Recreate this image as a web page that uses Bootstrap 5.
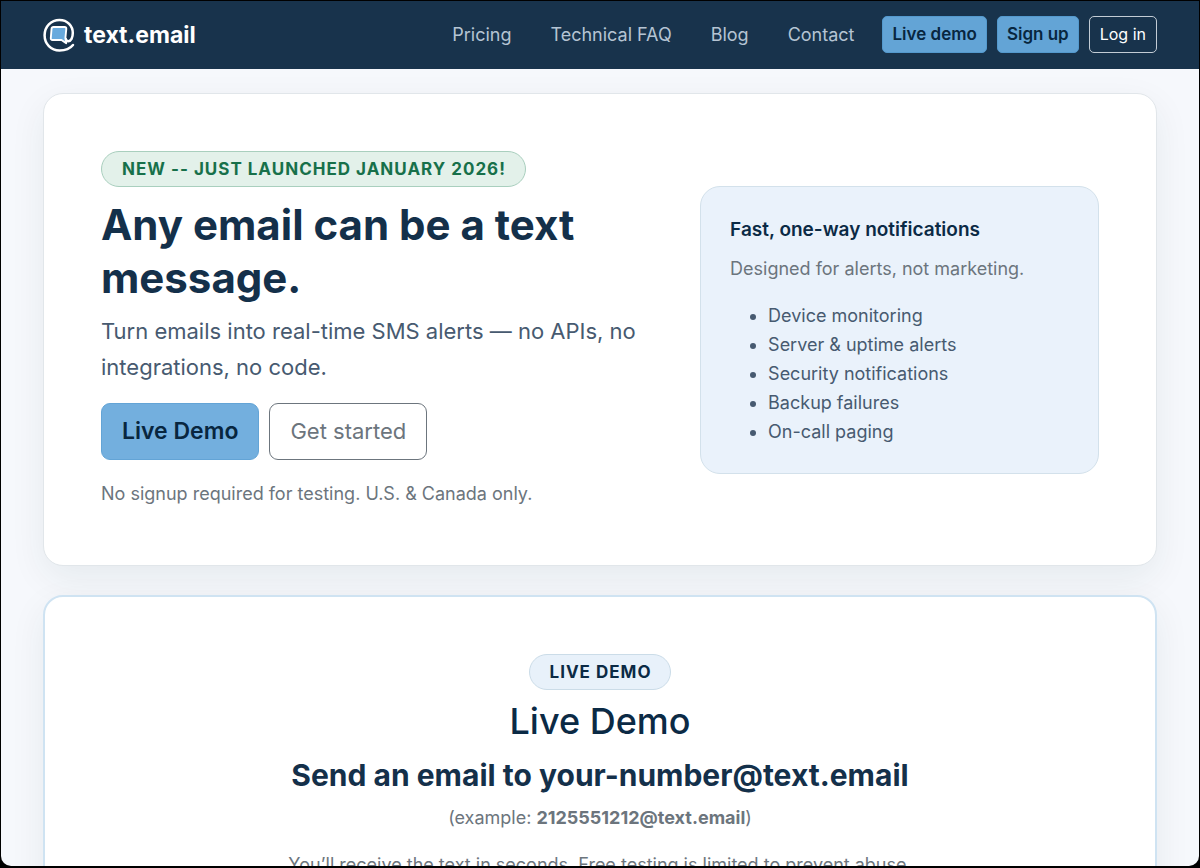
<!DOCTYPE html>
<html lang="en">
<head>
<meta charset="utf-8">
<meta name="viewport" content="width=device-width, initial-scale=1">
<title>text.email</title>
<link href="https://cdn.jsdelivr.net/npm/bootstrap@5.3.0/dist/css/bootstrap.min.css" rel="stylesheet">
<style>
:root { --navy: #14304a; --ink: #0b2a45; --sky: #63a4d6; --muted: #6c757d; --slate: #475a70; }
html { background: #000; }
body { font-family: Inter, "Liberation Sans", sans-serif; font-size: 18px; line-height: 29px; color: var(--slate); background: #000; }
.frame { border: 1px solid #000; border-bottom-width: 2px; }
.page-scroll { background: #f6f8fc; overflow-y: auto; scrollbar-width: none; border-radius: 0 0 10px 10px; }
.wrap { padding-left: 42px; padding-right: 42px; }
.topbar { background: #18334c; padding-top: 15px; padding-bottom: 16px; }
.topbar .navbar-brand { font-size: 23px; line-height: 34px; font-weight: 700; color: #fff; gap: 9px; }
.topbar .nav-link { color: #b5c4d3; font-size: 18px; }
.topbar .navbar-nav { gap: 39px; margin-right: 28px; }
.bar-actions, .hero-actions { gap: 10px; }
.hero-actions { margin-bottom: 19px; }
.btn-bar { font-size: 16px; line-height: 25px; padding: 5px 10px; border-radius: 5px; }
.btn-bar.btn-sky { font-size: 17px; padding-left: 9px; padding-right: 9px; }
.btn-sky { background: var(--sky); border-color: #5499cd; color: #08263f; font-weight: 600; }
.btn-sky:hover { background: #5499cd; }
.btn-ghost { border-color: #c3ccd5; color: #fff; }
.panel { background: #fff; border: 1px solid #e1e6ea; border-radius: 20px; padding: 57px; box-shadow: 0 12px 36px rgba(20, 60, 60, .07); }
.panel-demo { border: 2px solid #cfe3f2; }
.stack { padding-top: 24px; gap: 29px; }
.hero-row { --bs-gutter-x: 29px; }
.pill { display: inline-block; font-size: 17px; line-height: 24px; font-weight: 700; letter-spacing: 1px; padding: 5px 19px 5px 20px; border: 1px solid #cbdce8; border-radius: 18px; background: #e8f1fa; color: var(--ink); }
.pill-new { background: #e3f1ea; border-color: #a9cfbe; color: #17704a; }
.hero-title { font-size: 42px; line-height: 53px; font-weight: 700; color: var(--navy); margin: 11px 0 9px; }
.hero-text { font-size: 22px; line-height: 36px; margin-bottom: 18px; }
.btn-hero { font-size: 23px; line-height: 35px; padding: 10px 20px; border-radius: 9px; }
.btn-hero.btn-sky { background: #73afde; border-color: #63a4d6; }
.btn-line { font-size: 22px; border-color: var(--muted); color: var(--muted); }
.note { color: var(--muted); margin-bottom: 18px; }
.aside-box { background: #eaf2fb; border: 1px solid #d3e1eb; border-radius: 20px; padding: 28px 29px 27px; }
.aside-title { font-size: 19px; line-height: 29px; font-weight: 600; color: var(--ink); margin-bottom: 10px; }
.aside-box ul { padding-left: 38px; }
.demo-title { font-size: 36px; line-height: 46px; font-weight: 500; color: var(--ink); margin: 8px 0 12px; }
.demo-send { font-size: 30px; line-height: 38px; font-weight: 700; color: var(--navy); margin-bottom: 9px; }
</style>
</head>
<body>
<div class="frame vh-100 d-flex flex-column">
<div class="page-scroll flex-grow-1">
  <nav class="navbar navbar-expand topbar">
    <div class="container-fluid wrap">
      <a class="navbar-brand d-flex align-items-center m-0 p-0" href="#">
        <svg width="32" height="34" viewBox="0 0 32 34" fill="none" aria-hidden="true">
          <path d="M30 27 C26.800 31 22 32.500 16.500 32.500 C8 32.500 1.600 26 1.600 17.300 C1.600 8.500 8 2 16.500 2 C24.500 2 29.800 8 29.800 15 C29.800 19.500 28 23.200 25.200 23.200 C23.800 23.200 23 22.400 22.800 21" stroke="#fff" stroke-width="2.500" stroke-linecap="round"/>
          <path d="M10.500 9 H21.500 Q23.500 9 23.300 11 L22.400 20 L23.200 25.200 L18.500 22 H9.500 Q7.600 22 7.800 20 L8.500 11 Q8.700 9 10.500 9 Z" fill="#68aadd" stroke="#fff" stroke-width="1.900" stroke-linejoin="round"/>
        </svg>
        <span>text.email</span>
      </a>
      <div class="d-flex align-items-center ms-auto">
        <ul class="navbar-nav">
          <li class="nav-item"><a class="nav-link p-0" href="#">Pricing</a></li>
          <li class="nav-item"><a class="nav-link p-0" href="#">Technical FAQ</a></li>
          <li class="nav-item"><a class="nav-link p-0" href="#">Blog</a></li>
          <li class="nav-item"><a class="nav-link p-0" href="#">Contact</a></li>
        </ul>
        <div class="d-flex bar-actions">
          <button type="button" class="btn btn-bar btn-sky">Live demo</button>
          <button type="button" class="btn btn-bar btn-sky">Sign up</button>
          <button type="button" class="btn btn-bar btn-ghost">Log in</button>
        </div>
      </div>
    </div>
  </nav>
  <main class="container-fluid wrap stack d-flex flex-column pb-5">
    <section class="panel">
      <div class="row hero-row align-items-center">
        <div class="col-7">
          <div class="d-flex"><span class="pill pill-new">NEW -- JUST LAUNCHED JANUARY 2026!</span></div>
          <h1 class="hero-title">Any email can be a text message.</h1>
          <p class="hero-text">Turn emails into real-time SMS alerts — no APIs, no integrations, no code.</p>
          <div class="d-flex hero-actions">
            <button type="button" class="btn btn-hero btn-sky">Live Demo</button>
            <button type="button" class="btn btn-hero btn-line">Get started</button>
          </div>
          <p class="note mb-0">No signup required for testing. U.S. &amp; Canada only.</p>
        </div>
        <div class="col-5">
          <div class="aside-box">
            <h2 class="aside-title">Fast, one-way notifications</h2>
            <p class="note">Designed for alerts, not marketing.</p>
            <ul class="mb-0">
              <li>Device monitoring</li>
              <li>Server &amp; uptime alerts</li>
              <li>Security notifications</li>
              <li>Backup failures</li>
              <li>On-call paging</li>
            </ul>
          </div>
        </div>
      </div>
    </section>
    <section class="panel panel-demo text-center">
      <div class="d-flex justify-content-center"><span class="pill">LIVE DEMO</span></div>
      <h2 class="demo-title">Live Demo</h2>
      <h3 class="demo-send">Send an email to your-number@text.email</h3>
      <p class="note">(example: <strong>2125551212@text.email</strong>)</p>
      <p class="note">You’ll receive the text in seconds. Free testing is limited to prevent abuse.</p>
    </section>
  </main>
</div>
</div>
<script src="https://cdn.jsdelivr.net/npm/bootstrap@5.3.0/dist/js/bootstrap.bundle.min.js"></script>
</body>
</html>
